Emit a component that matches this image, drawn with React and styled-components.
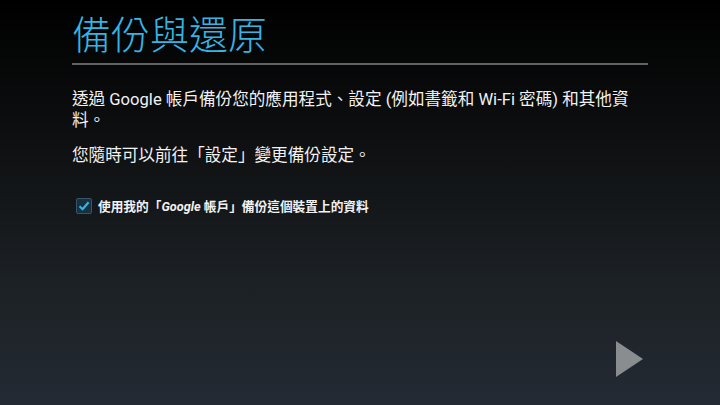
import React from 'react';
import styled, { createGlobalStyle } from 'styled-components';

const GlobalStyle = createGlobalStyle`
  html, body {
    margin: 0;
    padding: 0;
  }
  body {
    font-family: Roboto, "Noto Sans CJK TC", sans-serif;
    background: #000;
  }
`;

const App = () => {
  return (
    <>
      <GlobalStyle />
      <Screen>
        <Header>
          <Title>備份與還原</Title>
          <Divider />
        </Header>
        <Body>
          <Paragraph>
            透過 Google 帳戶備份您的應用程式、設定 (例如書籤和 Wi-Fi 密碼) 和其他資料。
          </Paragraph>
          <Paragraph>您隨時可以前往「設定」變更備份設定。</Paragraph>
          <CheckRow>
            <CheckBox>
              <svg width="12" height="12" viewBox="0 0 12 12">
                <path d="M1.5 6.2 L4.6 9.2 L10.6 2.2" fill="none" stroke="#33b5e5" strokeWidth="2.2" />
              </svg>
            </CheckBox>
            <CheckLabel>
              使用我的「<em>Google</em> 帳戶」備份這個裝置上的資料
            </CheckLabel>
          </CheckRow>
        </Body>
        <Footer>
          <NextButton aria-label="next">
            <svg width="27" height="36" viewBox="0 0 27 36">
              <polygon points="0,0 27,18 0,36" fill="#8a8d90" />
            </svg>
          </NextButton>
        </Footer>
      </Screen>
    </>
  );
};

export default App;

const Screen = styled.div`
  width: 720px;
  height: 405px;
  box-sizing: border-box;
  padding: 0 72px;
  display: flex;
  flex-direction: column;
  background: linear-gradient(180deg, #000000 0%, #0c0d0e 30%, #1c2125 70%, #242a33 100%);
  overflow: hidden;
`;

const Header = styled.div`
  padding-top: 6px;
`;

const Title = styled.h1`
  margin: 0;
  font-family: "Noto Sans CJK TC", sans-serif;
  font-weight: 300;
  font-size: 39px;
  line-height: 52px;
  color: #33b5e5;
`;

const Divider = styled.div`
  height: 2px;
  margin-top: 5px;
  background: #606264;
`;

const Body = styled.div`
  padding-top: 24px;
  display: flex;
  flex-direction: column;
`;

const Paragraph = styled.p`
  margin: 0 0 14px;
  font-size: 16.6px;
  line-height: 21px;
  color: #f2f2f2;
`;

const CheckRow = styled.div`
  display: flex;
  align-items: center;
  gap: 6px;
  margin-top: 16px;
  padding-left: 4px;
`;

const CheckBox = styled.span`
  width: 16px;
  height: 16px;
  box-sizing: border-box;
  border: 1px solid #35566a;
  background: #17323e;
  border-radius: 2px;
  display: flex;
  align-items: center;
  justify-content: center;
`;

const CheckLabel = styled.span`
  font-size: 12.7px;
  font-weight: 700;
  color: #f2f2f2;

  em {
    font-style: italic;
  }
`;

const Footer = styled.div`
  margin-top: auto;
  display: flex;
  justify-content: flex-end;
  padding: 0 5px 28px 0;
`;

const NextButton = styled.button`
  background: none;
  border: none;
  padding: 0;
  display: flex;
  cursor: pointer;
`;
